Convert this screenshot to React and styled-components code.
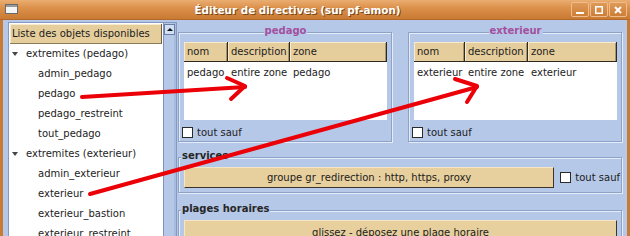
import React from "react";
import styled, { createGlobalStyle } from "styled-components";

const GlobalStyle = createGlobalStyle`
  html, body {
    margin: 0;
    padding: 0;
    background: #b5c8e8;
  }
  body {
    font-family: "DejaVu Sans", "Liberation Sans", sans-serif;
    font-size: 10px;
    color: #1c1c1c;
  }
`;

const tree = [
  {
    label: "extremites (pedago)",
    children: ["admin_pedago", "pedago", "pedago_restreint", "tout_pedago"],
  },
  {
    label: "extremites (exterieur)",
    children: [
      "admin_exterieur",
      "exterieur",
      "exterieur_bastion",
      "exterieur_restreint",
    ],
  },
];

const zones = [
  { name: "pedago", cols: "44px 62px 1fr" },
  { name: "exterieur", cols: "51px 63px 1fr" },
];

class App extends React.Component {
  render() {
    return (
      <Window>
        <GlobalStyle />
        <TitleBar>
          <WinIcon width="13" height="10" viewBox="0 0 13 10">
            <rect x="0.5" y="0.5" width="12" height="9" fill="#f4f4f4" stroke="#6a6a6a" />
            <rect x="1" y="1" width="11" height="2" fill="#9a9a9a" />
          </WinIcon>
          <Title>Éditeur de directives (sur pf-amon)</Title>
          <TitleButtons>
            <TitleButton>
              <svg width="8" height="8" viewBox="0 0 8 8">
                <rect x="0" y="6" width="8" height="2" fill="#fff" />
              </svg>
            </TitleButton>
            <TitleButton>
              <svg width="8" height="8" viewBox="0 0 8 8">
                <rect x="0.75" y="0.75" width="6.5" height="6.5" fill="none" stroke="#fff" strokeWidth="1.5" />
              </svg>
            </TitleButton>
            <TitleButton>
              <svg width="8" height="8" viewBox="0 0 8 8">
                <path d="M1 1 L7 7 M7 1 L1 7" stroke="#fff" strokeWidth="2" />
              </svg>
            </TitleButton>
          </TitleButtons>
        </TitleBar>

        <Body>
          <LeftPane>
            <List>
              <ListHeader>Liste des objets disponibles</ListHeader>
              {tree.map((group) => (
                <React.Fragment key={group.label}>
                  <TreeRow $depth={0}>
                    <Expander />
                    {group.label}
                  </TreeRow>
                  {group.children.map((child) => (
                    <TreeRow key={child} $depth={1}>
                      {child}
                    </TreeRow>
                  ))}
                </React.Fragment>
              ))}
            </List>
            <Scrollbar>
              <ScrollUp>
                <UpArrow />
              </ScrollUp>
            </Scrollbar>
          </LeftPane>

          <RightCol>
            <ZoneRow>
              {zones.map((zone) => (
                <ZoneFrame key={zone.name}>
                  <Legend $center $color="#a3509f">
                    {zone.name}
                  </Legend>
                  <TableBox>
                    <HeaderRow $cols={zone.cols}>
                      <HeadCell>nom</HeadCell>
                      <HeadCell>description</HeadCell>
                      <HeadCell>zone</HeadCell>
                    </HeaderRow>
                    <BodyRow $cols={zone.cols}>
                      <Cell>{zone.name}</Cell>
                      <Cell>entire zone</Cell>
                      <Cell>{zone.name}</Cell>
                    </BodyRow>
                  </TableBox>
                  <CheckRow>
                    <CheckBox />
                    tout sauf
                  </CheckRow>
                </ZoneFrame>
              ))}
            </ZoneRow>

            <SectionFrame $top="8px" $pad="2px 1px 4px 5px">
              <Legend $color="#262626">services</Legend>
              <ServiceRow>
                <TanButton $height="21px">
                  groupe gr_redirection : http, https, proxy
                </TanButton>
                <CheckRow $inline>
                  <CheckBox />
                  tout sauf
                </CheckRow>
              </ServiceRow>
            </SectionFrame>

            <SectionFrame $top="10px" $pad="2px 4px 4px 5px">
              <Legend $color="#262626">plages horaires</Legend>
              <TanButton $height="24px">
                glissez - déposez une plage horaire
              </TanButton>
            </SectionFrame>
          </RightCol>
        </Body>

        <Overlay width="630" height="236" viewBox="0 0 630 236">
          <g
            fill="none"
            stroke="#ec0008"
            strokeWidth="4"
            strokeLinecap="round"
            strokeLinejoin="round"
          >
            <path d="M82 97 L245 87" />
            <path d="M227 78 L245 86 L231 99" />
            <path d="M90 194 L477 87" />
            <path d="M455 79 L477 86 L467 102" />
          </g>
        </Overlay>
      </Window>
    );
  }
}

export default App;

const Window = styled.div`
  position: relative;
  width: 630px;
  height: 236px;
  overflow: hidden;
  background: #b5c8e8;
`;

const TitleBar = styled.div`
  height: 20px;
  box-sizing: border-box;
  display: flex;
  align-items: center;
  padding: 0 3px 0 5px;
  background: linear-gradient(to bottom, #eaae72 0%, #dc914b 40%, #c97a33 100%);
  border-bottom: 1px solid #b5682a;
`;

const WinIcon = styled.svg`
  display: block;
  margin-top: -1px;
`;

const Title = styled.div`
  flex: 1;
  text-align: center;
  color: #ffffff;
  font-weight: bold;
  font-size: 10.4px;
  text-shadow: 1px 1px 0 #7a4516;
  white-space: nowrap;
  padding-left: 6px;
`;

const TitleButtons = styled.div`
  display: flex;
  gap: 1px;
`;

const TitleButton = styled.div`
  width: 18px;
  height: 15px;
  box-sizing: border-box;
  display: flex;
  align-items: center;
  justify-content: center;
  border: 1px solid #efbd8c;
  border-radius: 2px;
  background: linear-gradient(to bottom, #df9a58, #cc7e37);
`;

const Body = styled.div`
  display: flex;
  height: 216px;
  box-sizing: border-box;
  padding: 2px 5px 0 5px;
  border-left: 3px solid #c97a33;
  border-right: 3px solid #c97a33;
  overflow: hidden;
`;

const LeftPane = styled.div`
  width: 169px;
  flex: 0 0 169px;
  box-sizing: border-box;
  display: flex;
  border: 1px solid #8498c0;
  border-bottom: none;
`;

const List = styled.div`
  flex: 1;
  background: #ffffff;
  padding: 1px 1px 0 1px;
`;

const ListHeader = styled.div`
  height: 20px;
  box-sizing: border-box;
  line-height: 19px;
  padding-left: 2px;
  background: #e6ce9c;
  border-right: 1px solid #6e5f44;
  border-bottom: 1px solid #8c7a58;
  box-shadow: inset 1px 1px 0 #f6ead0;
  white-space: nowrap;
`;

const TreeRow = styled.div`
  position: relative;
  height: 20px;
  line-height: 20px;
  padding-left: ${(props) => (props.$depth ? "28px" : "16px")};
  white-space: nowrap;
`;

const Expander = styled.span`
  position: absolute;
  left: 2px;
  top: 8px;
  width: 0;
  height: 0;
  border-left: 3px solid transparent;
  border-right: 3px solid transparent;
  border-top: 4px solid #454545;
`;

const Scrollbar = styled.div`
  width: 13px;
  flex: 0 0 13px;
  box-sizing: border-box;
  background: #b5c8e8;
  border-left: 1px solid #7f93bb;
  box-shadow: inset -2px 0 0 #a7bbde;
  padding: 1px 1px 0 0;
`;

const ScrollUp = styled.div`
  height: 11px;
  width: 11px;
  box-sizing: border-box;
  display: flex;
  align-items: center;
  justify-content: center;
  background: #d3dff3;
  border: 1px solid #6a7ea8;
`;

const UpArrow = styled.span`
  width: 0;
  height: 0;
  border-left: 3px solid transparent;
  border-right: 3px solid transparent;
  border-bottom: 3px solid #111111;
`;

const RightCol = styled.div`
  flex: 1;
  min-width: 0;
  margin-left: 1px;
  display: flex;
  flex-direction: column;
`;

const ZoneRow = styled.div`
  display: flex;
  gap: 16px;
  margin-top: 3px;
`;

const frameBase = `
  margin: 0;
  min-width: 0;
  box-sizing: border-box;
  border: 1px solid #8ea2c8;
  box-shadow: inset 1px 1px 0 #e4ecf9, 1px 1px 0 #e4ecf9;
`;

const ZoneFrame = styled.fieldset`
  ${frameBase}
  flex: 0 0 214px;
  padding: 2px 4px 2px 5px;
`;

const SectionFrame = styled.fieldset`
  ${frameBase}
  margin-top: ${(props) => props.$top};
  padding: ${(props) => props.$pad};
`;

const Legend = styled.legend`
  line-height: 12px;
  padding: 0 1px 3px;
  margin: ${(props) => (props.$center ? "0 auto" : "0 0 0 -3px")};
  font-weight: bold;
  color: ${(props) => props.$color};
  background: #b5c8e8;
`;

const TableBox = styled.div`
  height: 78px;
  background: #ffffff;
`;

const HeaderRow = styled.div`
  display: grid;
  grid-template-columns: ${(props) => props.$cols};
  height: 20px;
`;

const HeadCell = styled.div`
  box-sizing: border-box;
  line-height: 19px;
  padding-left: 3px;
  background: #e6ce9c;
  border-right: 1px solid #2e2a22;
  border-bottom: 1px solid #2e2a22;
  box-shadow: inset 1px 1px 0 #f6ead0, inset -1px 0 0 #a8946c;
  white-space: nowrap;
  overflow: hidden;
`;

const BodyRow = styled.div`
  display: grid;
  grid-template-columns: ${(props) => props.$cols};
  height: 20px;
  line-height: 20px;
  padding-top: 1px;
`;

const Cell = styled.div`
  padding-left: 3px;
  white-space: nowrap;
  overflow: hidden;
`;

const CheckRow = styled.div`
  display: flex;
  align-items: center;
  gap: 4px;
  height: 13px;
  margin: ${(props) => (props.$inline ? "0 0 0 6px" : "6px 0 0 -2px")};
  white-space: nowrap;
`;

const CheckBox = styled.span`
  width: 11px;
  height: 11px;
  box-sizing: border-box;
  background: #ffffff;
  border: 1px solid #2a2a2a;
  flex: 0 0 11px;
`;

const ServiceRow = styled.div`
  display: flex;
  align-items: center;
`;

const TanButton = styled.div`
  flex: 1;
  height: ${(props) => props.$height};
  box-sizing: border-box;
  display: flex;
  align-items: center;
  justify-content: center;
  background: #e7cf9e;
  border-top: 1px solid #f4e6c6;
  border-left: 1px solid #f4e6c6;
  border-right: 1px solid #3b342a;
  border-bottom: 1px solid #3b342a;
  white-space: nowrap;
`;

const Overlay = styled.svg`
  position: absolute;
  top: 0;
  left: 0;
  pointer-events: none;
`;
